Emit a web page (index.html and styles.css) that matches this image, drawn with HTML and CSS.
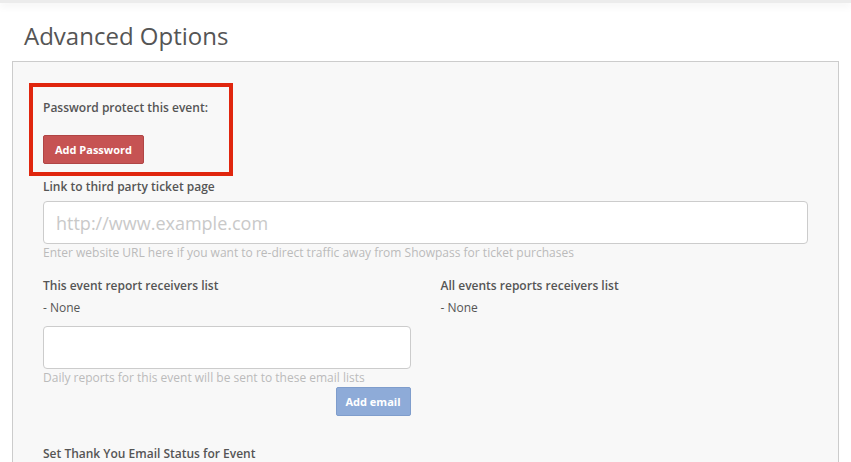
FILE: index.html
```html
<!DOCTYPE html>
<html lang="en">
<head>
<meta charset="utf-8">
<title>Advanced Options</title>
<link rel="stylesheet" href="styles.css">
</head>
<body>
<div class="topbar"></div>
<h2 class="page-title">Advanced Options</h2>
<div class="panel">
  <div class="pw-section">
    <div class="label">Password protect this event:</div>
    <button class="btn btn-danger">Add Password</button>
  </div>

  <div class="field">
    <div class="label">Link to third party ticket page</div>
    <input class="input input-lg" type="text" placeholder="http://www.example.com">
    <div class="help">Enter website URL here if you want to re-direct traffic away from Showpass for ticket purchases</div>
  </div>

  <div class="row">
    <div class="col">
      <div class="label">This event report receivers list</div>
      <div class="none">- None</div>
      <input class="input" type="text">
      <div class="help">Daily reports for this event will be sent to these email lists</div>
      <div class="actions"><button class="btn btn-primary">Add email</button></div>
    </div>
    <div class="col">
      <div class="label">All events reports receivers list</div>
      <div class="none">- None</div>
    </div>
  </div>

  <div class="label thanks">Set Thank You Email Status for Event</div>
</div>
</body>
</html>
```

FILE: styles.css
```css
html, body {
  margin: 0;
  padding: 0;
  background: #ffffff;
  font-family: "Open Sans", "DejaVu Sans", sans-serif;
  color: #555555;
  overflow: hidden;
}

.topbar {
  height: 3px;
  background: #ececec;
  box-shadow: 0 2px 9px rgba(0, 0, 0, 0.10);
}

.page-title {
  margin: 20px 0 12px 24px;
  font-size: 24px;
  font-weight: 400;
  line-height: 26px;
  color: #555555;
}

.panel {
  margin: 0 12px;
  background: #f8f8f8;
  border: 1px solid #cccccc;
  padding: 37px 30px 20px;
  height: 500px;
}

.label {
  font-size: 12px;
  font-weight: 600;
  line-height: 17px;
  color: #555555;
}

.pw-section {
  position: relative;
}

.pw-section::before {
  content: "";
  position: absolute;
  left: -14px;
  top: -16px;
  width: 196px;
  height: 85px;
  border: 4px solid #e0260e;
}

.btn {
  display: inline-block;
  border: 1px solid transparent;
  border-radius: 2px;
  font-family: "Open Sans", "DejaVu Sans", sans-serif;
  font-size: 11px;
  font-weight: 700;
  color: #ffffff;
  height: 29px;
  padding: 0 12px;
  line-height: 27px;
}

.pw-section .btn {
  margin-top: 19px;
  width: 101px;
  padding: 0;
}

.btn-danger {
  background: #c65353;
  border-color: #b04545;
}

.btn-primary {
  background: #8eabd8;
  border-color: #7f9dcc;
  width: 75px;
  padding: 0;
}

.field {
  margin-top: 14px;
}

.input {
  display: block;
  box-sizing: border-box;
  width: 100%;
  height: 43px;
  margin-top: 6px;
  border: 1px solid #cccccc;
  border-radius: 4px;
  background: #ffffff;
  padding: 0 12px;
  font-family: "Open Sans", "DejaVu Sans", sans-serif;
  font-size: 18px;
  color: #555555;
  outline: none;
}

.input::placeholder {
  color: #c9c9c9;
}

.help {
  font-size: 12px;
  line-height: 17px;
  color: #bbbbbb;
  margin-top: 0;
}

.row {
  display: grid;
  grid-template-columns: 1fr 1fr;
  column-gap: 30px;
  margin-top: 16px;
}

.none {
  font-size: 12px;
  line-height: 17px;
  margin-top: 5px;
  color: #555555;
}

.col .input {
  margin-top: 10px;
}

.actions {
  display: flex;
  justify-content: flex-end;
  margin-top: 1px;
}

.thanks {
  margin-top: 29px;
}
```
